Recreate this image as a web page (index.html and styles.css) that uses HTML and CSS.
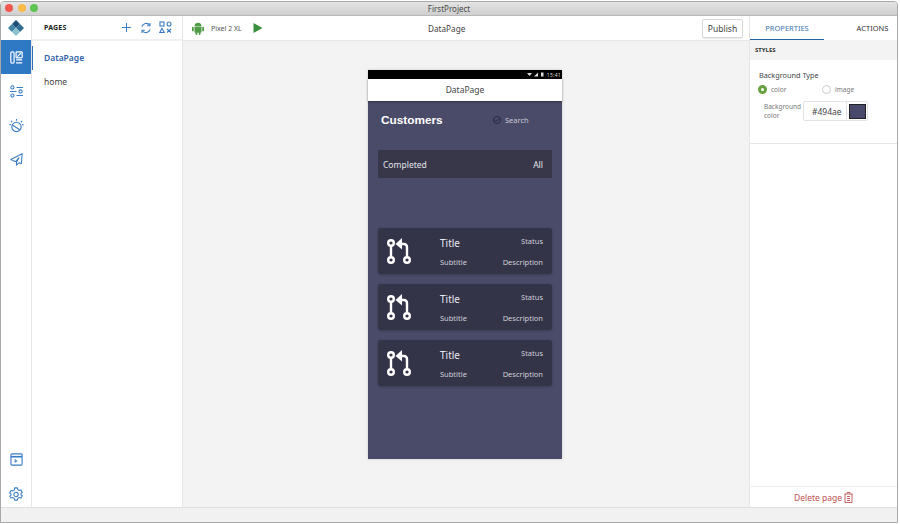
FILE: index.html
```html
<!DOCTYPE html>
<html lang="en">
<head>
    <meta charset="utf-8"/>
    <title>FirstProject</title>
    <link rel="stylesheet" href="styles.css">
</head>
<body>
<div class="window">
    <div class="titlebar">
        <span class="dots"><i class="dot red"></i><i class="dot yellow"></i><i class="dot green"></i></span>
        <span class="title">FirstProject</span>
    </div>
    <div class="main">
        <div class="rail">
            <div class="logo">
                <svg width="16" height="16" viewBox="0 0 16 16"><path d="M8 0l4 4-4 4-4-4z" fill="#1d4e79"/><path d="M4 4l4 4-4 4-4-4z" fill="#3f86a8"/><path d="M12 4l4 4-4 4-4-4z" fill="#2f6d94"/><path d="M8 8l4 4-4 4-4-4z" fill="#8cc4cc"/></svg>
            </div>
            <div class="rail-item active">
                <svg width="13" height="13" viewBox="0 0 16 16" fill="none" stroke="#fff" stroke-width="1.500"><rect x="1" y="1" width="4" height="14" rx="1.500"/><rect x="7.500" y="1" width="7.500" height="7.500" rx="1"/><path d="M9 7l4.500-4.500M7.500 11h7.500M7.500 14.500h7.500"/></svg>
            </div>
            <div class="rail-item">
                <svg width="13" height="13" viewBox="0 0 16 16" fill="none" stroke="#3a7cc6" stroke-width="1.300"><circle cx="3" cy="3" r="2"/><path d="M8 3h8M0 8h8"/><circle cx="13" cy="8" r="2"/><circle cx="3" cy="13" r="2"/><path d="M8 13h8"/></svg>
            </div>
            <div class="rail-item">
                <svg width="15" height="15" viewBox="0 0 16 16" fill="none" stroke="#3a7cc6" stroke-width="1.200"><circle cx="8" cy="9.500" r="5"/><path d="M3.500 7.500l8 5M8 1v2M2 3l1.300 1.300M14 3l-1.300 1.300M0.500 7h1.500M14 7h1.500"/></svg>
            </div>
            <div class="rail-item">
                <svg width="13" height="13" viewBox="0 0 16 16" fill="none" stroke="#3a7cc6" stroke-width="1.300" stroke-linejoin="round"><path d="M15 1L1 8l4 2 2 0.500L11 6 8 11v4l3-3 3 1z"/></svg>
            </div>
            <div class="rail-spacer"></div>
            <div class="rail-item terminal">
                <svg width="13" height="13" viewBox="0 0 14 14" fill="none" stroke="#3a7cc6" stroke-width="1.200"><rect x="1" y="1" width="12" height="12" rx="1"/><path d="M1 4h12" stroke-width="1.800"/><path d="M5 7l2 1.500L5 10"/></svg>
            </div>
            <div class="rail-item settings">
                <svg width="14" height="14" viewBox="0 0 16 16" fill="none" stroke="#3a7cc6" stroke-width="1.200" stroke-linejoin="round"><path d="M6.500 1h3l.5 2 1.700 1 2-.6 1.500 2.600-1.500 1.400v1.200l1.500 1.400-1.500 2.600-2-.6-1.700 1-.5 2h-3l-.5-2-1.700-1-2 .6L.8 10.600l1.500-1.400V8L.8 6.600 2.300 4l2 .6 1.700-1z"/><circle cx="8" cy="8.500" r="2.500"/></svg>
            </div>
        </div>
        <div class="pages">
            <div class="pages-head">
                <span class="pages-label">PAGES</span>
                <svg class="head-icon" width="11" height="11" viewBox="0 0 12 12" fill="none" stroke="#3a7cc6" stroke-width="1.100"><path d="M6 1v10M1 6h10"/></svg>
                <svg class="head-icon" width="12" height="12" viewBox="0 0 13 13" fill="none" stroke="#3a7cc6" stroke-width="1.200"><path d="M2 5a4.800 4.800 0 0 1 8.500-1.500M11 8a4.800 4.800 0 0 1-8.500 1.500"/><path d="M10.800 1v3h-3M2.200 12V9h3"/></svg>
                <svg class="head-icon" width="13" height="13" viewBox="0 0 13 13" fill="none" stroke="#3a7cc6" stroke-width="1.100"><rect x="1" y="1" width="4" height="4"/><circle cx="10" cy="3" r="2"/><path d="M3 7.500l2.200 4H.8zM8 8l4 3.500M12 8l-4 3.500"/></svg>
            </div>
            <ul class="page-list">
                <li class="page-item current">DataPage</li>
                <li class="page-item">home</li>
            </ul>
        </div>
        <div class="center">
            <div class="toolbar">
                <div class="device">
                    <svg width="12" height="13" viewBox="0 0 12 13" fill="#4f9a45"><path d="M2.500 4.200a3.500 3.500 0 0 1 7 0zM2.500 4.800h7v5a1 1 0 0 1-1 1h-5a1 1 0 0 1-1-1z"/><rect x="0" y="4.800" width="1.800" height="4.500" rx=".9"/><rect x="10.200" y="4.800" width="1.800" height="4.500" rx=".9"/><rect x="3.500" y="10" width="1.800" height="3" rx=".9"/><rect x="6.700" y="10" width="1.800" height="3" rx=".9"/></svg>
                    <span class="device-name">Pixel 2 XL</span>
                    <svg width="10" height="10" viewBox="0 0 9 10"><path d="M0 0l9 5-9 5z" fill="#3a8f3f"/></svg>
                </div>
                <span class="page-name">DataPage</span>
                <button class="publish">Publish</button>
            </div>
            <div class="canvas">
                <div class="phone">
                    <div class="status">
                        <svg width="18" height="5" viewBox="0 0 18 5" fill="#ddd"><path d="M0 1h5L2.500 4zM7 4.500L11 .5v4zM14 .5h2.500v4H14z"/></svg>
                        <span>15:41</span>
                    </div>
                    <div class="appbar">DataPage</div>
                    <div class="screen">
                        <div class="heading">
                            <span class="customers">Customers</span>
                            <span class="search">
                                <svg width="8" height="8" viewBox="0 0 8 8" fill="none" stroke="#24253a" stroke-width=".9"><circle cx="4" cy="4" r="3.500"/><path d="M2.300 4l1.300 1.300L6 2.700"/></svg>
                                Search
                            </span>
                        </div>
                        <div class="filter"><span>Completed</span><span>All</span></div>
                        <div class="card">
                            <svg class="merge" width="24" height="26" viewBox="0 0 24 26" fill="none" stroke="#fff" stroke-width="2.400"><circle cx="4" cy="5" r="2.800"/><circle cx="4" cy="22" r="2.800"/><circle cx="20" cy="22" r="2.800"/><path d="M4 7.500v12M20 19.500V9a3 3 0 0 0-3-3h-4"/><path d="M15 0L8.500 6l6.500 5.500z" fill="#fff" stroke="none"/></svg>
                            <div class="card-col"><span class="card-title">Title</span><span class="card-sub">Subtitle</span></div>
                            <div class="card-col right"><span class="card-sub">Status</span><span class="card-sub">Description</span></div>
                        </div>
                        <div class="card">
                            <svg class="merge" width="24" height="26" viewBox="0 0 24 26" fill="none" stroke="#fff" stroke-width="2.400"><circle cx="4" cy="5" r="2.800"/><circle cx="4" cy="22" r="2.800"/><circle cx="20" cy="22" r="2.800"/><path d="M4 7.500v12M20 19.500V9a3 3 0 0 0-3-3h-4"/><path d="M15 0L8.500 6l6.500 5.500z" fill="#fff" stroke="none"/></svg>
                            <div class="card-col"><span class="card-title">Title</span><span class="card-sub">Subtitle</span></div>
                            <div class="card-col right"><span class="card-sub">Status</span><span class="card-sub">Description</span></div>
                        </div>
                        <div class="card">
                            <svg class="merge" width="24" height="26" viewBox="0 0 24 26" fill="none" stroke="#fff" stroke-width="2.400"><circle cx="4" cy="5" r="2.800"/><circle cx="4" cy="22" r="2.800"/><circle cx="20" cy="22" r="2.800"/><path d="M4 7.500v12M20 19.500V9a3 3 0 0 0-3-3h-4"/><path d="M15 0L8.500 6l6.500 5.500z" fill="#fff" stroke="none"/></svg>
                            <div class="card-col"><span class="card-title">Title</span><span class="card-sub">Subtitle</span></div>
                            <div class="card-col right"><span class="card-sub">Status</span><span class="card-sub">Description</span></div>
                        </div>
                    </div>
                </div>
            </div>
        </div>
        <div class="side">
            <div class="tabs">
                <span class="tab active">PROPERTIES</span>
                <span class="tab second">ACTIONS</span>
            </div>
            <div class="styles-head">STYLES</div>
            <div class="styles-body">
                <div class="bg-label">Background Type</div>
                <div class="radios">
                    <span class="radio"><i class="radio-mark on"></i>color</span>
                    <span class="radio"><i class="radio-mark"></i>image</span>
                </div>
                <div class="color-row">
                    <span class="color-label">Background color</span>
                    <span class="color-field"><span class="color-value">#494ae</span><span class="swatch-wrap"><i class="swatch"></i></span></span>
                </div>
            </div>
            <div class="side-spacer"></div>
            <div class="delete">
                Delete page
                <svg width="9" height="11" viewBox="0 0 9 11" fill="none" stroke="#c0504f" stroke-width=".9"><path d="M3 1.500V.5h3v1M.5 2h8M1 2v8.500h7V2M3 4.500h3M3 6.500h3M3 8.500h3"/></svg>
            </div>
        </div>
    </div>
    <div class="footer"></div>
</div>
</body>
</html>
```

FILE: styles.css
```css
html, body {
    margin: 0;
    height: 100%;
    background: #fff;
}

body {
    padding: 1px 2px 1px 0;
    box-sizing: border-box;
    font-family: "Noto Sans", "Open Sans", sans-serif;
    color: #3d3d3d;
    overflow: hidden;
}

.window {
    height: 100%;
    display: flex;
    flex-direction: column;
    border: 1px solid #a9a9a9;
    border-radius: 4px 4px 0 0;
    box-sizing: border-box;
    overflow: hidden;
}

.titlebar {
    flex: 0 0 13px;
    position: relative;
    display: flex;
    align-items: center;
    justify-content: center;
    background: linear-gradient(#e4e4e4, #cfcfcf);
    border-bottom: 1px solid #b9b9b9;
}

.dots {
    position: absolute;
    left: 4px;
    top: 2px;
    display: flex;
    gap: 4.500px;
}

.dot {
    width: 8px;
    height: 8px;
    border-radius: 50%;
}

.red { background: #f2584f; }
.yellow { background: #f7bc45; }
.green { background: #5fc454; }

.title {
    font-size: 8px;
    color: #4a4a4a;
}

.main {
    flex: 1;
    display: flex;
    min-height: 0;
}

.rail {
    width: 30px;
    display: flex;
    flex-direction: column;
    border-right: 1px solid #e6e6e6;
}

.logo {
    height: 24px;
    display: flex;
    align-items: center;
    justify-content: center;
}

.rail-item {
    height: 34px;
    display: flex;
    align-items: center;
    justify-content: center;
}

.rail-item.active {
    background: #2f78c4;
}

.rail-item.terminal {
    height: 35px;
    margin-bottom: 3px;
}

.rail-item.settings {
    height: 27px;
}

.rail-spacer {
    flex: 1;
}

.pages {
    width: 150px;
    border-right: 1px solid #e6e6e6;
}

.pages-head {
    height: 23px;
    display: flex;
    align-items: center;
    gap: 7.500px;
    padding: 0 10px 0 12px;
    border-bottom: 2px solid #f0f0f0;
}

.pages-label {
    flex: 1;
    font-size: 7px;
    font-weight: 700;
    color: #222;
    letter-spacing: .2px;
}

.page-list {
    list-style: none;
    margin: 0;
    padding: 5px 0 0;
}

.page-item {
    height: 24px;
    line-height: 24px;
    padding-left: 12px;
    font-size: 8.500px;
    color: #444;
}

.page-item.current {
    font-weight: 600;
    color: #2f5fa8;
    box-shadow: inset 1px 0 #2f6fb5;
}

.center {
    flex: 1;
    min-width: 0;
    display: flex;
    flex-direction: column;
}

.toolbar {
    height: 24px;
    display: flex;
    align-items: center;
    padding: 0 6px 0 9px;
    border-bottom: 1px solid #e6e6e6;
}

.device {
    width: 100px;
    flex: none;
    display: flex;
    align-items: center;
}

.device-name {
    margin: 0 11px 0 7px;
    font-size: 7px;
    color: #555;
}

.page-name {
    margin-left: 136px;
    font-size: 8.200px;
    color: #444;
}

.publish {
    width: 41px;
    height: 19px;
    margin-left: auto;
    padding: 0;
    font-family: inherit;
    font-size: 8.500px;
    color: #444;
    background: #fff;
    border: 1px solid #d9d9d9;
    border-radius: 2px;
    box-shadow: 0 1px 1px #e8e8e8;
}

.canvas {
    flex: 1;
    display: flex;
    justify-content: center;
    background: #f3f3f3;
    padding-top: 29px;
}

.phone {
    width: 194px;
    height: 389px;
    margin-right: 2px;
    display: flex;
    flex-direction: column;
    box-shadow: 0 0 3px #ccc;
}

.status {
    height: 9px;
    flex: none;
    display: flex;
    align-items: center;
    justify-content: flex-end;
    gap: 2px;
    padding-right: 1px;
    background: #000;
    color: #ddd;
    font-size: 5px;
    letter-spacing: .3px;
}

.appbar {
    height: 22px;
    flex: none;
    line-height: 21px;
    text-align: center;
    background: #fff;
    font-size: 8.500px;
    color: #444;
    position: relative;
    box-shadow: 0 1px 2px rgba(0, 0, 0, .35);
}

.screen {
    flex: 1;
    padding: 0 10px;
    background: #4a4b69;
    color: #e4e4ec;
}

.heading {
    height: 37px;
    display: flex;
    align-items: center;
    padding: 0 20px 0 3px;
}

.customers {
    flex: 1;
    font-family: "Liberation Sans", sans-serif;
    font-size: 11.800px;
    font-weight: 700;
    color: #fff;
}

.search {
    display: flex;
    align-items: center;
    gap: 4px;
    width: 39px;
    font-size: 7.500px;
    color: #c9c9d6;
}

.filter {
    height: 28px;
    margin: 12px 0 50px;
    padding: 0 9px 0 5px;
    display: flex;
    align-items: center;
    justify-content: space-between;
    background: #373749;
    font-size: 8.500px;
    border-radius: 1px;
}

.card {
    height: 46px;
    margin-bottom: 10px;
    display: flex;
    align-items: center;
    padding: 0 9px;
    background: #343448;
    border-radius: 3px;
    box-shadow: 0 1px 3px rgba(0, 0, 0, .25);
}

.merge {
    flex: none;
    margin-right: 29px;
}

.card-col {
    flex: 1;
    height: 31px;
    display: flex;
    flex-direction: column;
    justify-content: space-between;
}

.card-col.right {
    align-items: flex-end;
}

.card-title {
    font-size: 10px;
    line-height: 14px;
    color: #e8e8ee;
}

.card-sub {
    font-size: 7.500px;
    line-height: 10px;
    color: #cfcfd9;
}

.side {
    width: 147px;
    flex: none;
    display: flex;
    flex-direction: column;
    border-left: 1px solid #e6e6e6;
}

.tabs {
    height: 24px;
    flex: none;
    display: flex;
    align-items: center;
}

.tab {
    height: 100%;
    line-height: 24px;
    text-align: center;
    font-size: 7.500px;
    color: #333;
    width: 74px;
    box-sizing: border-box;
}

.tab.active {
    color: #3a74ad;
    border-bottom: 1px solid #2663a3;
}

.tab.second {
    width: 73px;
    padding-left: 24px;
    white-space: nowrap;
}

.styles-head {
    height: 20px;
    flex: none;
    line-height: 20px;
    padding-left: 5px;
    background: #f3f3f3;
    font-size: 6px;
    font-weight: 700;
    color: #333;
}

.styles-body {
    height: 84px;
    flex: none;
    padding: 9px 9px 0;
    box-sizing: border-box;
    border-bottom: 1px solid #e6e6e6;
}

.bg-label {
    font-size: 7.300px;
    line-height: 12px;
    color: #444;
}

.radios {
    display: flex;
    height: 13px;
    align-items: center;
    margin: 2px 0 0 -1px;
}

.radio {
    width: 64px;
    display: flex;
    align-items: center;
    gap: 4px;
    font-size: 6.500px;
    color: #777;
}

.radio-mark {
    width: 9px;
    height: 9px;
    box-sizing: border-box;
    border-radius: 50%;
    border: 1px solid #ccc;
}

.radio-mark.on {
    border: 3px solid #67a23f;
    background: #fff;
}

.color-row {
    display: flex;
    align-items: center;
    margin-top: 5px;
    padding-left: 5px;
}

.color-label {
    width: 39px;
    font-size: 6.500px;
    line-height: 9px;
    color: #777;
}

.color-field {
    width: 65px;
    height: 20px;
    display: flex;
    align-items: center;
    border: 1px solid #e3e3e3;
    border-radius: 2px;
    box-sizing: border-box;
}

.color-value {
    flex: 1;
    overflow: hidden;
    padding-left: 8px;
    font-size: 8.500px;
    color: #444;
}

.swatch-wrap {
    width: 20px;
    height: 100%;
    display: flex;
    align-items: center;
    justify-content: center;
    border-left: 1px solid #e3e3e3;
}

.swatch {
    width: 17px;
    height: 15px;
    background: #494a6b;
    border: 1px solid #222;
    box-sizing: border-box;
}

.side-spacer {
    flex: 1;
}

.delete {
    height: 20px;
    flex: none;
    display: flex;
    align-items: center;
    justify-content: center;
    gap: 2px;
    border-top: 1px solid #efefef;
    font-size: 8.500px;
    color: #c0504f;
}

.footer {
    flex: 0 0 14px;
    background: #f1f1f1;
    border-top: 1px solid #e0e0e0;
}
```
